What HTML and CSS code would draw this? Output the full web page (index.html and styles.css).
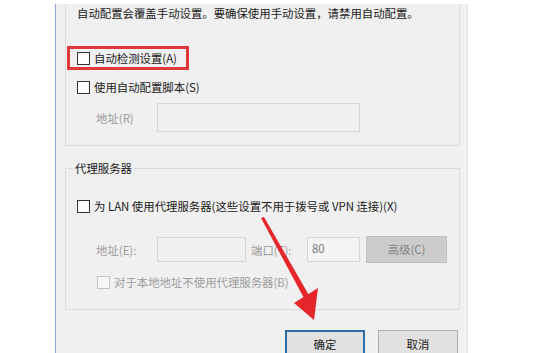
FILE: index.html
```html
<!DOCTYPE html>
<html lang="zh-CN">
<head>
    <meta charset="UTF-8">
    <title>局域网设置</title>
    <link rel="stylesheet" href="styles.css">
</head>
<body>
    <div class="dialog">
        <div class="group auto">
            <p class="note">自动配置会覆盖手动设置。要确保使用手动设置，请禁用自动配置。</p>
            <label class="row marked"><span class="box"></span>自动检测设置(A)</label>
            <label class="row second"><span class="box"></span>使用自动配置脚本(S)</label>
            <div class="field-row script">
                <span class="lbl disabled">地址(R)</span>
                <span class="input wide"></span>
            </div>
        </div>

        <fieldset class="group proxy">
            <legend>代理服务器</legend>
            <label class="row lan"><span class="box"></span>为 LAN 使用代理服务器(这些设置不用于拨号或 VPN 连接)(X)</label>
            <div class="field-row addr">
                <span class="lbl disabled">地址(E):</span>
                <span class="input addr-in"></span>
                <span class="lbl port disabled">端口(T):</span>
                <span class="input port-in">80</span>
                <span class="btn-adv">高级(C)</span>
            </div>
            <label class="row bypass disabled"><span class="box off"></span>对于本地地址不使用代理服务器(B)</label>
        </fieldset>

        <div class="actions">
            <button class="btn ok">确定</button>
            <button class="btn">取消</button>
        </div>
    </div>

    <svg class="arrow" width="551" height="353" viewBox="0 0 551 353">
        <polygon points="261,218 264,217 310,297 305,300" fill="#e5262b"/>
        <polygon points="294,303 318,288 314,320" fill="#e5262b"/>
    </svg>
</body>
</html>
```

FILE: styles.css
```css
body {
    margin: 0;
    background-color: #ffffff;
    font-family: "Noto Sans CJK SC", "Noto Sans", sans-serif;
    font-size: 11.4px;
    color: #1a1a1a;
    width: 551px;
    height: 353px;
    overflow: hidden;
}
.dialog {
    margin-left: 55px;
    width: 395px;
    height: 353px;
    background-color: #f0f0f0;
    border-left: 1px solid #8ea6cf;
    border-right: 1px solid #e2e2e2;
    padding: 0 7px 0 9px;
}
.group {
    border: 1px solid #dcdcdc;
    padding: 0 0 0 11px;
    margin: 0;
}
.auto {
    border-top: none;
    padding-bottom: 13px;
}
.note {
    margin: 4px 0 0;
    line-height: 18px;
    white-space: nowrap;
}
.row {
    display: flex;
    align-items: center;
    height: 18px;
    line-height: 18px;
    white-space: nowrap;
}
.box {
    width: 11px;
    height: 11px;
    border: 1px solid #333333;
    background-color: #ffffff;
    margin-right: 4px;
    flex: none;
}
.box.off {
    border-color: #c4c4c4;
    background-color: #f7f7f7;
}
.marked {
    width: fit-content;
    margin: 24px 0 0 -10px;
    padding: 0 9px 0 7px;
    border: 3px solid #e0373c;
}
.second {
    margin-top: 8px;
}
.field-row {
    display: flex;
    align-items: center;
    padding-left: 19px;
}
.script {
    margin-top: 7px;
}
.lbl {
    width: 61px;
    flex: none;
}
.disabled {
    color: #9c9c9c;
}
.input {
    box-sizing: border-box;
    border: 1px solid #d6d6d6;
    background-color: #f0f0f0;
    flex: none;
}
.wide {
    width: 203px;
    height: 29px;
}
.proxy {
    margin-top: 13px;
    padding-bottom: 18px;
}
.proxy legend {
    margin-left: -4px;
    padding: 0 2px;
    line-height: 18px;
}
.lan {
    margin-top: 20px;
}
.addr {
    margin-top: 21px;
}
.addr-in {
    width: 89px;
    height: 25px;
}
.port {
    width: 56px;
    margin-left: 5px;
}
.port-in {
    width: 53px;
    height: 25px;
    padding-left: 4px;
    line-height: 20px;
    color: #7a7a7a;
    background-color: #f4f4f4;
}
.btn-adv {
    width: 81px;
    height: 27px;
    margin-left: 6px;
    box-sizing: border-box;
    border: 1px solid #bfbfbf;
    background-color: #cccccc;
    color: #858585;
    text-align: center;
    line-height: 25px;
}
.bypass {
    margin-top: 10px;
    padding-left: 20px;
}
.actions {
    display: flex;
    justify-content: flex-end;
    gap: 13px;
    margin-top: 20px;
    padding-right: 2px;
}
.btn {
    width: 80px;
    height: 27px;
    box-sizing: border-box;
    border: 1px solid #adadad;
    background-color: #e1e1e1;
    font-family: inherit;
    font-size: 11.4px;
    color: #1a1a1a;
    padding: 0;
}
.btn.ok {
    border: 2px solid #2d6ea8;
}
.arrow {
    position: absolute;
    left: 0;
    top: 0;
    pointer-events: none;
}
```
